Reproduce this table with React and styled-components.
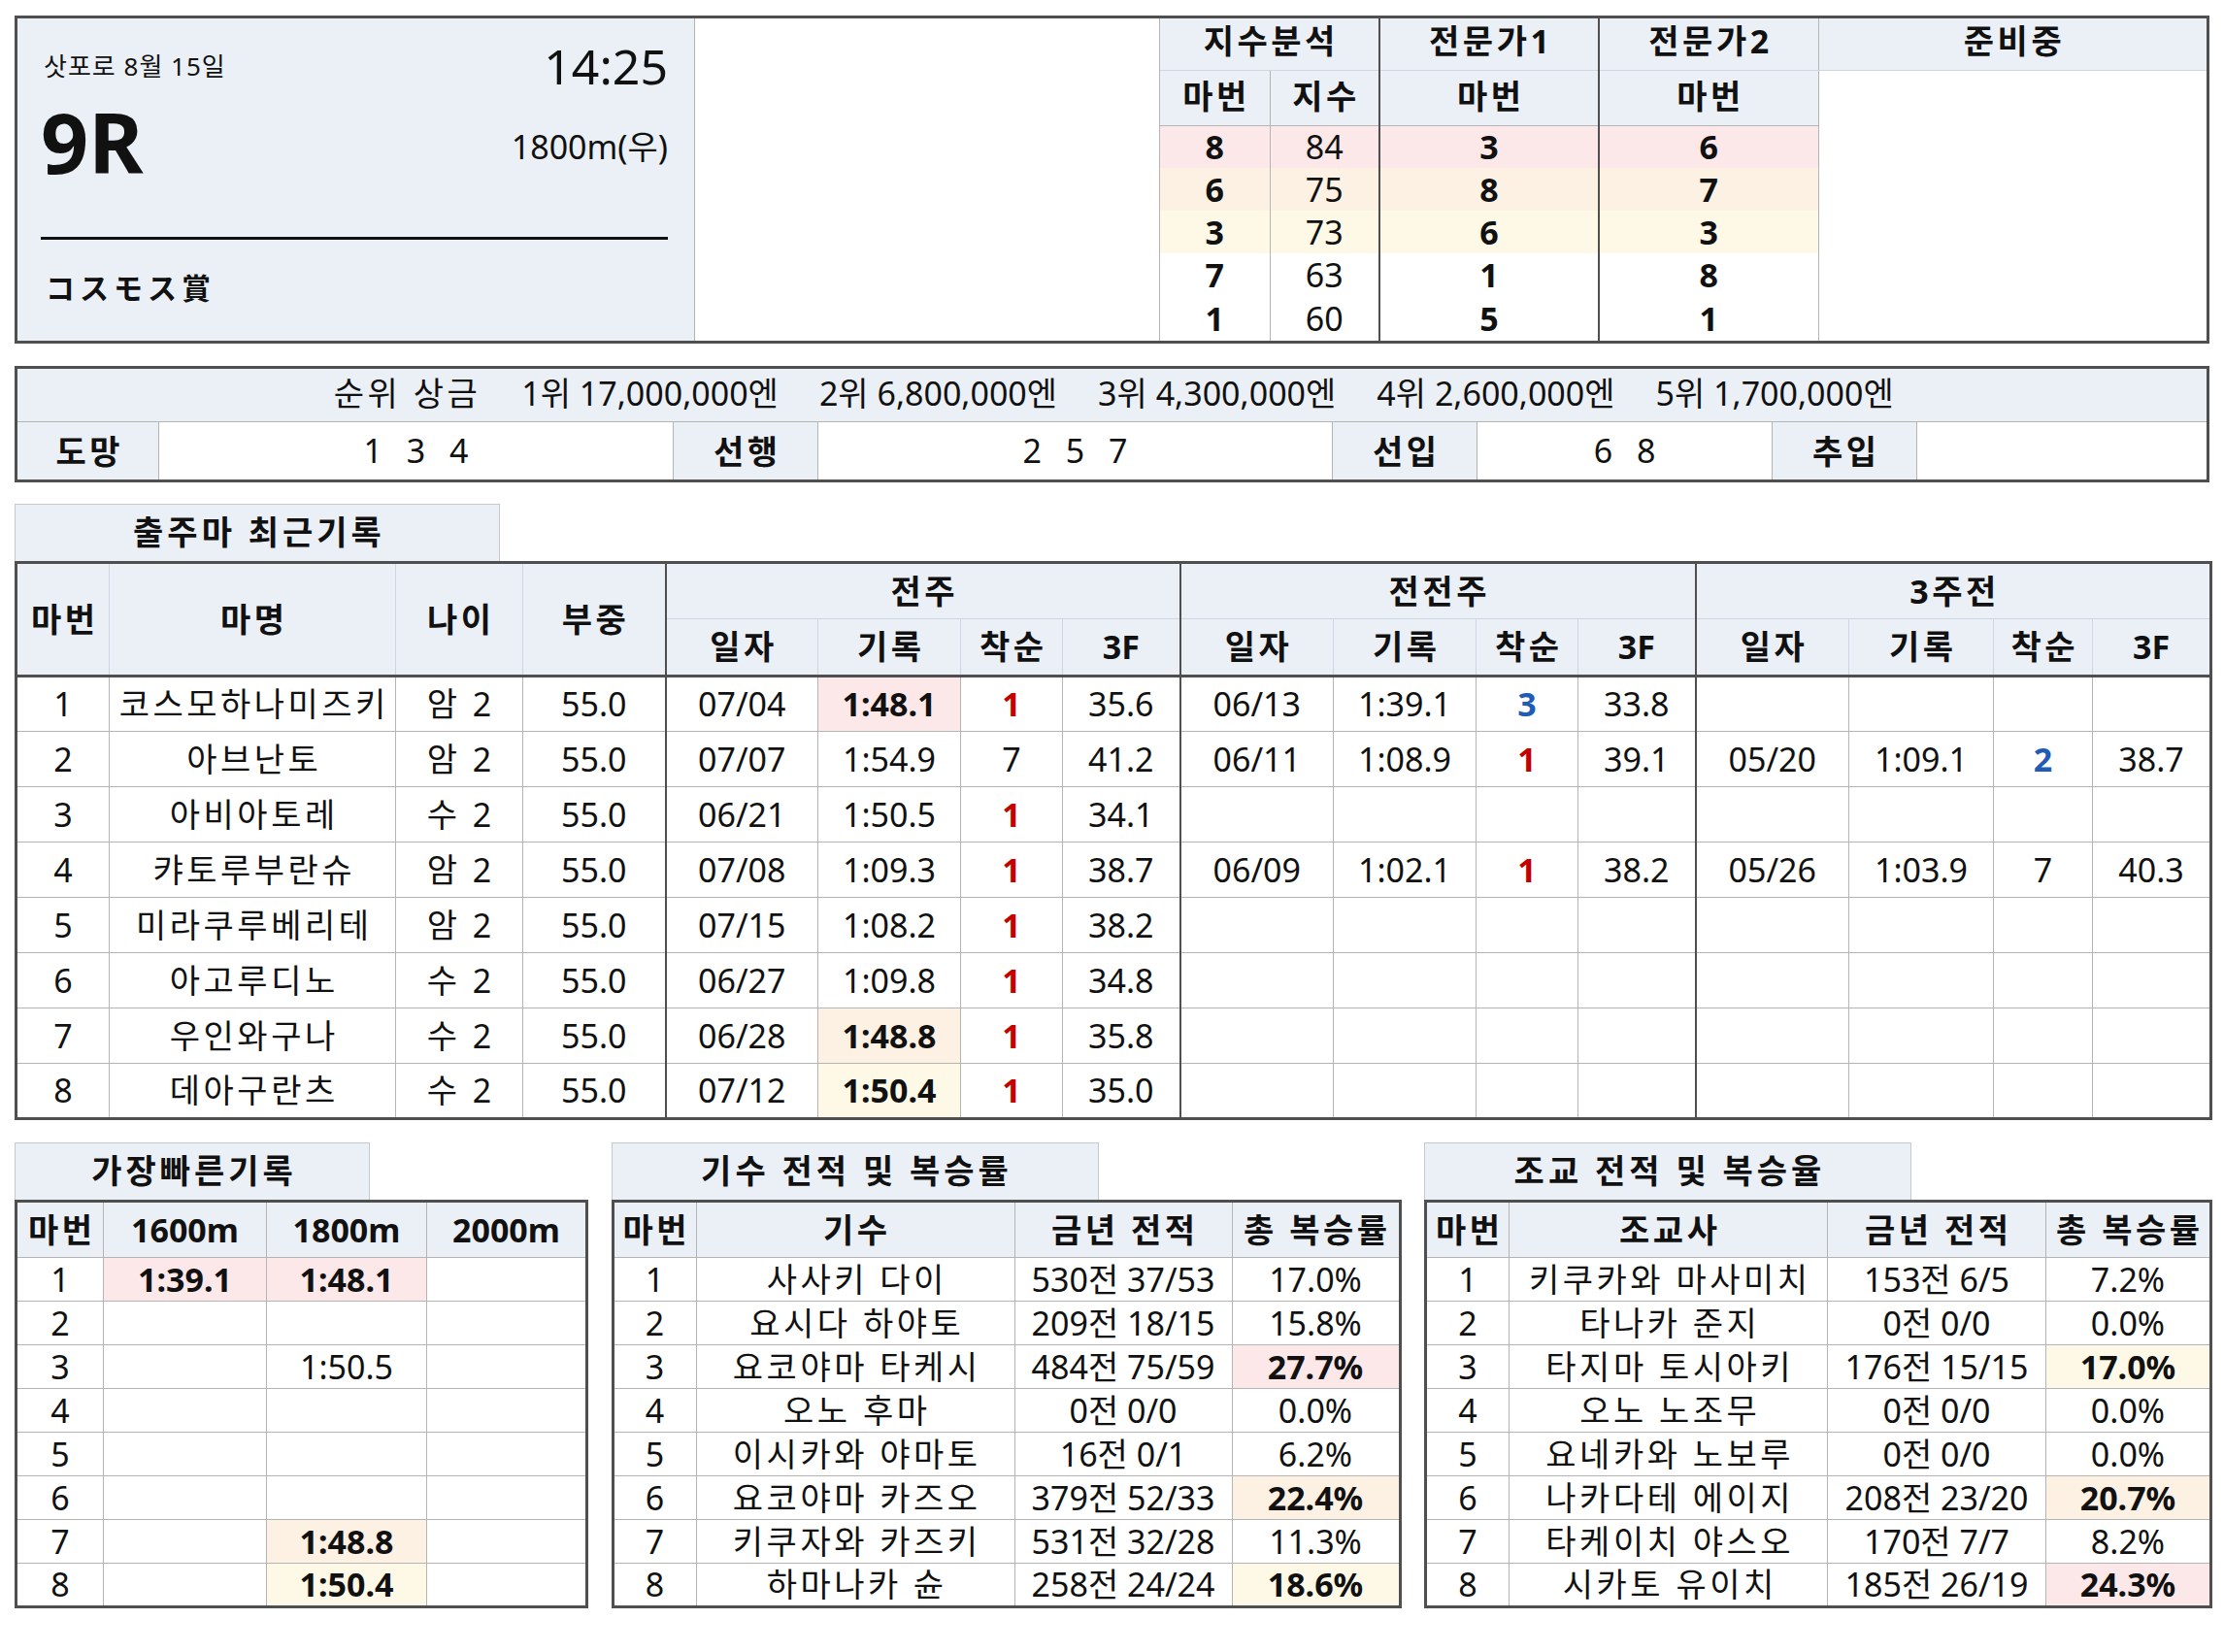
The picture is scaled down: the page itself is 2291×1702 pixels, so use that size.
import React from "react";
import styled, { createGlobalStyle, css } from "styled-components";

const DARK = "#4f4f4f";
const LINE = "#b4b4b4";
const SOFT = "#cdd6e2";
const HEAD = "#ebf0f7";
const INK = "#111";
const RED = "#c40000";
const BLUE = "#1f5cb5";
const FILL = { pink: "#fce8e8", peach: "#fdf1e4", yellow: "#fdf9e6" };

const GlobalStyle = createGlobalStyle`
  *, *::before, *::after { box-sizing: border-box; }
  html, body { margin: 0; padding: 0; background: #fff; }
  body {
    font-family: "Noto Sans", "Noto Sans CJK KR", sans-serif;
    color: ${INK};
  }
`;

const Page = styled.div`
  width: 2291px;
  padding: 16px 15px 40px;
  display: flex;
  flex-direction: column;
`;

// hangul in the source is wider than Noto CJK, so korean texts get some tracking
const wide = css`
  letter-spacing: ${(p) => (p.$kr ? "3.5px" : "0")};
  padding-left: ${(p) => (p.$kr ? "3.5px" : "0")};
`;

const cellBase = css`
  padding: 0;
  text-align: center;
  vertical-align: middle;
  font-size: 34px;
  line-height: 1.2;
  white-space: nowrap;
  ${wide};
`;

/* ---------- top box ---------- */

const TopBox = styled.div`
  display: flex;
  height: 338px;
  border: 3px solid ${DARK};
`;

const InfoPanel = styled.div`
  width: 698px;
  flex: none;
  display: flex;
  flex-direction: column;
  padding: 0 27px 0 24px;
  background: ${HEAD};
  border-right: 1px solid ${LINE};
`;

const InfoTop = styled.div`
  margin-top: 24px;
  height: 50px;
  display: flex;
  align-items: center;
  justify-content: space-between;
`;

const DateText = styled.span`
  font-size: 26px;
  line-height: 1;
  padding-left: 3px;
  letter-spacing: 1px;
`;

const TimeText = styled.span`
  font-size: 50px;
  line-height: 1;
`;

const InfoMid = styled.div`
  margin-top: 10px;
  height: 84px;
  display: flex;
  align-items: flex-start;
  justify-content: space-between;
`;

const RaceNo = styled.span`
  font-size: 86px;
  font-weight: 700;
  line-height: 1;
`;

const Distance = styled.span`
  margin-top: 31px;
  font-size: 34px;
  line-height: 1;
`;

const Rule = styled.div`
  margin-top: 57px;
  height: 3px;
  background: #111;
`;

const RaceName = styled.div`
  margin-top: 35px;
  padding-left: 5px;
  font-size: 30px;
  font-weight: 700;
  line-height: 1;
  letter-spacing: 5px;
`;

const BlankPanel = styled.div`
  width: 479px;
  flex: none;
  background: #fff;
  border-right: 1px solid ${LINE};
`;

const IndexTable = styled.table`
  width: 1078px;
  height: 100%;
  table-layout: fixed;
  border-collapse: collapse;
`;

const IndexRow = styled.tr`
  height: ${(p) => p.$h}px;
`;

const IndexHead = styled.th`
  ${cellBase};
  font-weight: 700;
  padding-bottom: ${(p) => (p.$sub ? "2px" : "6px")};
  background: ${HEAD};
  border-left: ${(p) => (p.$group ? `2px solid ${DARK}` : p.$first ? "none" : `1px solid ${LINE}`)};
  border-bottom: 1px solid ${(p) => (p.$sub ? LINE : SOFT)};
`;

const IndexCell = styled.td`
  ${cellBase};
  font-weight: ${(p) => (p.$bold ? 700 : 400)};
  background: ${(p) => (p.$fill ? FILL[p.$fill] : "#fff")};
  border-left: ${(p) => (p.$group ? `2px solid ${DARK}` : p.$first ? "none" : `1px solid ${LINE}`)};
`;

const ReadyArea = styled.td`
  background: #fff;
  border-left: 1px solid ${LINE};
  border-top: 1px solid ${LINE};
`;

/* ---------- prize box ---------- */

const PrizeBox = styled.div`
  margin-top: 23px;
  border: 3px solid ${DARK};
`;

const PrizeLine = styled.div`
  height: 55px;
  display: flex;
  align-items: center;
  justify-content: center;
  gap: 42px;
  padding-bottom: 7px;
  font-size: 34px;
  background: ${HEAD};
  border-bottom: 1px solid ${LINE};
`;

const PrizeItem = styled.span`
  ${wide};
`;

const StyleGrid = styled.div`
  height: 59px;
  display: grid;
  grid-template-columns: 146px 530px 149px 530px 149px 304px 149px 1fr;
`;

const StyleLabel = styled.div`
  display: flex;
  align-items: center;
  justify-content: center;
  font-size: 34px;
  font-weight: 700;
  letter-spacing: 3.5px;
  padding: 0 0 2px 3.5px;
  background: ${HEAD};
  border-right: 1px solid ${LINE};
`;

const StyleValue = styled.div`
  display: flex;
  align-items: center;
  justify-content: center;
  padding-bottom: 2px;
  font-size: 34px;
  word-spacing: 16px;
  background: #fff;
  border-right: ${(p) => (p.$last ? "none" : `1px solid ${LINE}`)};
`;

/* ---------- sections ---------- */

const Section = styled.section`
  width: ${(p) => p.$w}px;
  margin-top: ${(p) => p.$top || 0}px;
  display: flex;
  flex-direction: column;
`;

const Tab = styled.div`
  width: ${(p) => p.$w}px;
  height: 59px;
  display: flex;
  align-items: center;
  justify-content: center;
  font-size: 34px;
  font-weight: 700;
  letter-spacing: 4px;
  padding: 0 0 5px 4px;
  background: ${HEAD};
  border: 1px solid #c4c9d0;
  border-bottom: none;
`;

const RecordTable = styled.table`
  width: 100%;
  table-layout: fixed;
  border-collapse: collapse;
  border: 3px solid ${DARK};
`;

const HeadRow = styled.tr`
  height: ${(p) => p.$h}px;
`;

const RecordHead = styled.th`
  ${cellBase};
  font-weight: 700;
  background: ${HEAD};
  border: 1px solid ${SOFT};
  ${(p) => p.$lead && css`border-left: 2px solid ${DARK};`}
  ${(p) => p.$base && css`border-bottom: 3px solid ${DARK};`}
`;

const RecordCell = styled.td`
  ${cellBase};
  height: 57px;
  font-weight: ${(p) => (p.$bold ? 700 : 400)};
  color: ${(p) => p.$color || INK};
  background: ${(p) => (p.$fill ? FILL[p.$fill] : "#fff")};
  border: 1px solid ${LINE};
  ${(p) => p.$lead && css`border-left: 2px solid ${DARK};`}
`;

const BottomRow = styled.div`
  margin-top: 23px;
  display: flex;
  justify-content: space-between;
`;

const StatTable = styled.table`
  width: 100%;
  table-layout: fixed;
  border-collapse: collapse;
  border: 3px solid ${DARK};
`;

const StatHead = styled.th`
  ${cellBase};
  height: 58px;
  font-weight: 700;
  background: ${HEAD};
  border: 1px solid ${LINE};
`;

const StatCell = styled.td`
  ${cellBase};
  height: 45px;
  font-weight: ${(p) => (p.$bold ? 700 : 400)};
  background: ${(p) => (p.$fill ? FILL[p.$fill] : "#fff")};
  border: 1px solid ${LINE};
`;

/* ---------- data ---------- */

const indexRows = [
  { fill: "pink", v: ["8", "84", "3", "6"] },
  { fill: "peach", v: ["6", "75", "8", "7"] },
  { fill: "yellow", v: ["3", "73", "6", "3"] },
  { v: ["7", "63", "1", "8"] },
  { v: ["1", "60", "5", "1"] },
];

const prizes = [
  "1위 17,000,000엔",
  "2위 6,800,000엔",
  "3위 4,300,000엔",
  "4위 2,600,000엔",
  "5위 1,700,000엔",
];

const horses = [
  { no: 1, name: "코스모하나미즈키", age: "암 2", wt: "55.0", runs: [["07/04", "1:48.1", "1", "35.6", "pink"], ["06/13", "1:39.1", "3", "33.8"], null] },
  { no: 2, name: "아브난토", age: "암 2", wt: "55.0", runs: [["07/07", "1:54.9", "7", "41.2"], ["06/11", "1:08.9", "1", "39.1"], ["05/20", "1:09.1", "2", "38.7"]] },
  { no: 3, name: "아비아토레", age: "수 2", wt: "55.0", runs: [["06/21", "1:50.5", "1", "34.1"], null, null] },
  { no: 4, name: "캬토루부란슈", age: "암 2", wt: "55.0", runs: [["07/08", "1:09.3", "1", "38.7"], ["06/09", "1:02.1", "1", "38.2"], ["05/26", "1:03.9", "7", "40.3"]] },
  { no: 5, name: "미라쿠루베리테", age: "암 2", wt: "55.0", runs: [["07/15", "1:08.2", "1", "38.2"], null, null] },
  { no: 6, name: "아고루디노", age: "수 2", wt: "55.0", runs: [["06/27", "1:09.8", "1", "34.8"], null, null] },
  { no: 7, name: "우인와구나", age: "수 2", wt: "55.0", runs: [["06/28", "1:48.8", "1", "35.8", "peach"], null, null] },
  { no: 8, name: "데아구란츠", age: "수 2", wt: "55.0", runs: [["07/12", "1:50.4", "1", "35.0", "yellow"], null, null] },
];

const recordCols = [96, 295, 131, 147, 157, 147, 105, 121, 158, 147, 105, 121, 158, 149, 102, 122];

const fastest = [
  [["1:39.1", "pink"], ["1:48.1", "pink"], null],
  [null, null, null],
  [null, ["1:50.5"], null],
  [null, null, null],
  [null, null, null],
  [null, null, null],
  [null, ["1:48.8", "peach"], null],
  [null, ["1:50.4", "yellow"], null],
];

const jockeys = [
  ["사사키 다이", "530전 37/53", "17.0%"],
  ["요시다 하야토", "209전 18/15", "15.8%"],
  ["요코야마 타케시", "484전 75/59", "27.7%", "pink"],
  ["오노 후마", "0전 0/0", "0.0%"],
  ["이시카와 야마토", "16전 0/1", "6.2%"],
  ["요코야마 카즈오", "379전 52/33", "22.4%", "peach"],
  ["키쿠자와 카즈키", "531전 32/28", "11.3%"],
  ["하마나카 슌", "258전 24/24", "18.6%", "yellow"],
];

const trainers = [
  ["키쿠카와 마사미치", "153전 6/5", "7.2%"],
  ["타나카 준지", "0전 0/0", "0.0%"],
  ["타지마 토시아키", "176전 15/15", "17.0%", "yellow"],
  ["오노 노조무", "0전 0/0", "0.0%"],
  ["요네카와 노보루", "0전 0/0", "0.0%"],
  ["나카다테 에이지", "208전 23/20", "20.7%", "peach"],
  ["타케이치 야스오", "170전 7/7", "8.2%"],
  ["시카토 유이치", "185전 26/19", "24.3%", "pink"],
];

function rankColor(r) {
  if (r === "1") return RED;
  if (r === "2" || r === "3") return BLUE;
  return undefined;
}

function Cols({ widths }) {
  return (
    <colgroup>
      {widths.map((w, i) => (
        <col key={i} style={{ width: w }} />
      ))}
    </colgroup>
  );
}

function RunCells({ run }) {
  if (!run) {
    return (
      <>
        <RecordCell $lead />
        <RecordCell />
        <RecordCell />
        <RecordCell />
      </>
    );
  }
  const [date, time, rank, f3, fill] = run;
  const color = rankColor(rank);
  return (
    <>
      <RecordCell $lead>{date}</RecordCell>
      <RecordCell $fill={fill} $bold={!!fill}>
        {time}
      </RecordCell>
      <RecordCell $color={color} $bold={!!color}>
        {rank}
      </RecordCell>
      <RecordCell>{f3}</RecordCell>
    </>
  );
}

function PersonTable({ title, label, rows, widths }) {
  return (
    <>
      <Tab $w={502}>{title}</Tab>
      <StatTable>
        <Cols widths={widths} />
        <thead>
          <tr>
            <StatHead $kr>마번</StatHead>
            <StatHead $kr>{label}</StatHead>
            <StatHead $kr>금년 전적</StatHead>
            <StatHead $kr>총 복승률</StatHead>
          </tr>
        </thead>
        <tbody>
          {rows.map(([name, rec, rate, fill], i) => (
            <tr key={i}>
              <StatCell>{i + 1}</StatCell>
              <StatCell $kr>{name}</StatCell>
              <StatCell>{rec}</StatCell>
              <StatCell $fill={fill} $bold={!!fill}>
                {rate}
              </StatCell>
            </tr>
          ))}
        </tbody>
      </StatTable>
    </>
  );
}

export default function App() {
  const dataHeights = [44, 44, 44, 45, 45];
  return (
    <Page>
      <GlobalStyle />

      <TopBox>
        <InfoPanel>
          <InfoTop>
            <DateText>삿포로 8월 15일</DateText>
            <TimeText>14:25</TimeText>
          </InfoTop>
          <InfoMid>
            <RaceNo>9R</RaceNo>
            <Distance>1800m(우)</Distance>
          </InfoMid>
          <Rule />
          <RaceName>コスモス賞</RaceName>
        </InfoPanel>
        <BlankPanel />
        <IndexTable>
          <Cols widths={[113, 113, 226, 226, 400]} />
          <tbody>
            <IndexRow $h={53}>
              <IndexHead colSpan={2} $first $kr>
                지수분석
              </IndexHead>
              <IndexHead $group $kr>
                전문가1
              </IndexHead>
              <IndexHead $group $kr>
                전문가2
              </IndexHead>
              <IndexHead $kr>준비중</IndexHead>
            </IndexRow>
            <IndexRow $h={57}>
              <IndexHead $sub $first $kr>
                마번
              </IndexHead>
              <IndexHead $sub $kr>
                지수
              </IndexHead>
              <IndexHead $sub $group $kr>
                마번
              </IndexHead>
              <IndexHead $sub $group $kr>
                마번
              </IndexHead>
              <ReadyArea rowSpan={6} />
            </IndexRow>
            {indexRows.map((r, i) => (
              <IndexRow key={i} $h={dataHeights[i]}>
                <IndexCell $first $bold $fill={r.fill}>
                  {r.v[0]}
                </IndexCell>
                <IndexCell $fill={r.fill}>{r.v[1]}</IndexCell>
                <IndexCell $group $bold $fill={r.fill}>
                  {r.v[2]}
                </IndexCell>
                <IndexCell $group $bold $fill={r.fill}>
                  {r.v[3]}
                </IndexCell>
              </IndexRow>
            ))}
          </tbody>
        </IndexTable>
      </TopBox>

      <PrizeBox>
        <PrizeLine>
          <PrizeItem $kr>순위 상금</PrizeItem>
          {prizes.map((p) => (
            <PrizeItem key={p}>{p}</PrizeItem>
          ))}
        </PrizeLine>
        <StyleGrid>
          <StyleLabel>도망</StyleLabel>
          <StyleValue>1 3 4</StyleValue>
          <StyleLabel>선행</StyleLabel>
          <StyleValue>2 5 7</StyleValue>
          <StyleLabel>선입</StyleLabel>
          <StyleValue>6 8</StyleValue>
          <StyleLabel>추입</StyleLabel>
          <StyleValue $last />
        </StyleGrid>
      </PrizeBox>

      <Section $w={2261} $top={22}>
        <Tab $w={500}>출주마 최근기록</Tab>
        <RecordTable>
          <Cols widths={recordCols} />
          <thead>
            <HeadRow $h={58}>
              <RecordHead rowSpan={2} $base $kr>
                마번
              </RecordHead>
              <RecordHead rowSpan={2} $base $kr>
                마명
              </RecordHead>
              <RecordHead rowSpan={2} $base $kr>
                나이
              </RecordHead>
              <RecordHead rowSpan={2} $base $kr>
                부중
              </RecordHead>
              <RecordHead colSpan={4} $lead $kr>
                전주
              </RecordHead>
              <RecordHead colSpan={4} $lead $kr>
                전전주
              </RecordHead>
              <RecordHead colSpan={4} $lead $kr>
                3주전
              </RecordHead>
            </HeadRow>
            <HeadRow $h={59}>
              {[0, 1, 2].map((g) =>
                ["일자", "기록", "착순", "3F"].map((h, i) => (
                  <RecordHead key={`${g}-${h}`} $lead={i === 0} $base $kr={h !== "3F"}>
                    {h}
                  </RecordHead>
                ))
              )}
            </HeadRow>
          </thead>
          <tbody>
            {horses.map((h) => (
              <tr key={h.no}>
                <RecordCell>{h.no}</RecordCell>
                <RecordCell $kr>{h.name}</RecordCell>
                <RecordCell $kr>{h.age}</RecordCell>
                <RecordCell>{h.wt}</RecordCell>
                {h.runs.map((run, i) => (
                  <RunCells key={i} run={run} />
                ))}
              </tr>
            ))}
          </tbody>
        </RecordTable>
      </Section>

      <BottomRow>
        <Section $w={588}>
          <Tab $w={366}>가장빠른기록</Tab>
          <StatTable>
            <Cols widths={[90, 168, 165, 165]} />
            <thead>
              <tr>
                <StatHead $kr>마번</StatHead>
                <StatHead>1600m</StatHead>
                <StatHead>1800m</StatHead>
                <StatHead>2000m</StatHead>
              </tr>
            </thead>
            <tbody>
              {fastest.map((row, i) => (
                <tr key={i}>
                  <StatCell>{i + 1}</StatCell>
                  {row.map((c, j) => (
                    <StatCell key={j} $fill={c && c[1]} $bold={!!(c && c[1])}>
                      {c ? c[0] : ""}
                    </StatCell>
                  ))}
                </tr>
              ))}
            </tbody>
          </StatTable>
        </Section>

        <Section $w={811}>
          <PersonTable title="기수 전적 및 복승률" label="기수" rows={jockeys} widths={[86, 328, 224, 173]} />
        </Section>

        <Section $w={809}>
          <PersonTable title="조교 전적 및 복승율" label="조교사" rows={trainers} widths={[86, 328, 225, 170]} />
        </Section>
      </BottomRow>
    </Page>
  );
}
